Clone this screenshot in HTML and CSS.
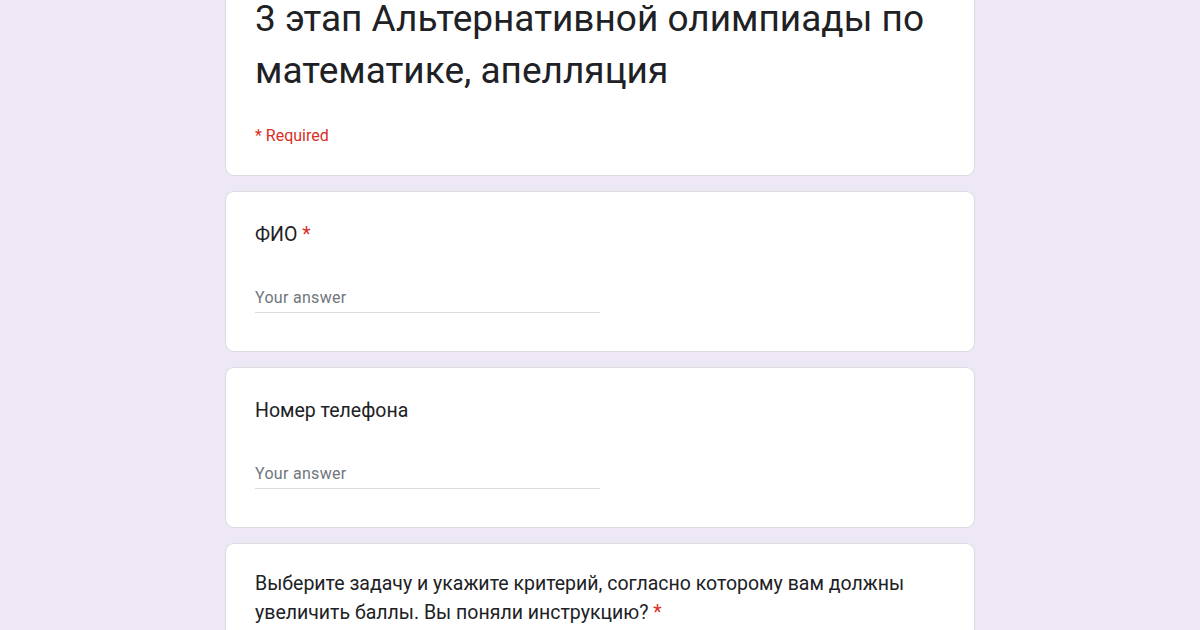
FILE: index.html
```html
<!DOCTYPE html>
<html lang="ru">

<head>
	<meta charset="UTF-8">
	<title>3 этап Альтернативной олимпиады по математике, апелляция</title>
	<link rel="stylesheet" href="styles.css">
</head>

<body>
	<div class="form">
		<div class="card header">
			<h1 class="form-title">3 этап Альтернативной олимпиады по математике, апелляция</h1>
			<p class="required-note">* Required</p>
		</div>
		<div class="card question">
			<div class="question-title">ФИО <span class="star">*</span></div>
			<div class="answer">Your answer</div>
		</div>
		<div class="card question">
			<div class="question-title">Номер телефона</div>
			<div class="answer">Your answer</div>
		</div>
		<div class="card question choice">
			<div class="question-title">Выберите задачу и укажите критерий, согласно которому вам должны увеличить баллы. Вы поняли инструкцию? <span class="star">*</span></div>
		</div>
	</div>
</body>

</html>
```

FILE: styles.css
```css
body {
	margin: 0;
	background-color: #ede7f6;
	font-family: Roboto, "Liberation Sans", sans-serif;
	color: #202124;
	overflow: hidden;
}

.form {
	width: 750px;
	margin: -38px auto 0;
	display: flex;
	flex-direction: column;
	gap: 15px;
}

.card {
	box-sizing: border-box;
	background-color: white;
	border: 1px solid #dadce0;
	border-radius: 9px;
	padding: 0 29px;
}

.header {
	padding-top: 30px;
	padding-bottom: 29px;
}

.form-title {
	margin: 0;
	font-size: 37px;
	font-weight: 400;
	line-height: 52px;
	letter-spacing: 0;
}

.required-note {
	margin: 29px 0 0;
	color: #d93025;
	font-size: 16px;
	line-height: 20px;
}

.question {
	height: 161px;
	padding-top: 28px;
}

.question.choice {
	padding-top: 25px;
}

.question-title {
	font-size: 19.5px;
	line-height: 29px;
	max-width: 670px;
}

.star {
	color: #d93025;
}

.answer {
	width: 345px;
	margin-top: 39px;
	padding-bottom: 4px;
	border-bottom: 1px solid #dadce0;
	color: #70757a;
	font-size: 16px;
	letter-spacing: 0.3px;
	line-height: 20px;
}
```
